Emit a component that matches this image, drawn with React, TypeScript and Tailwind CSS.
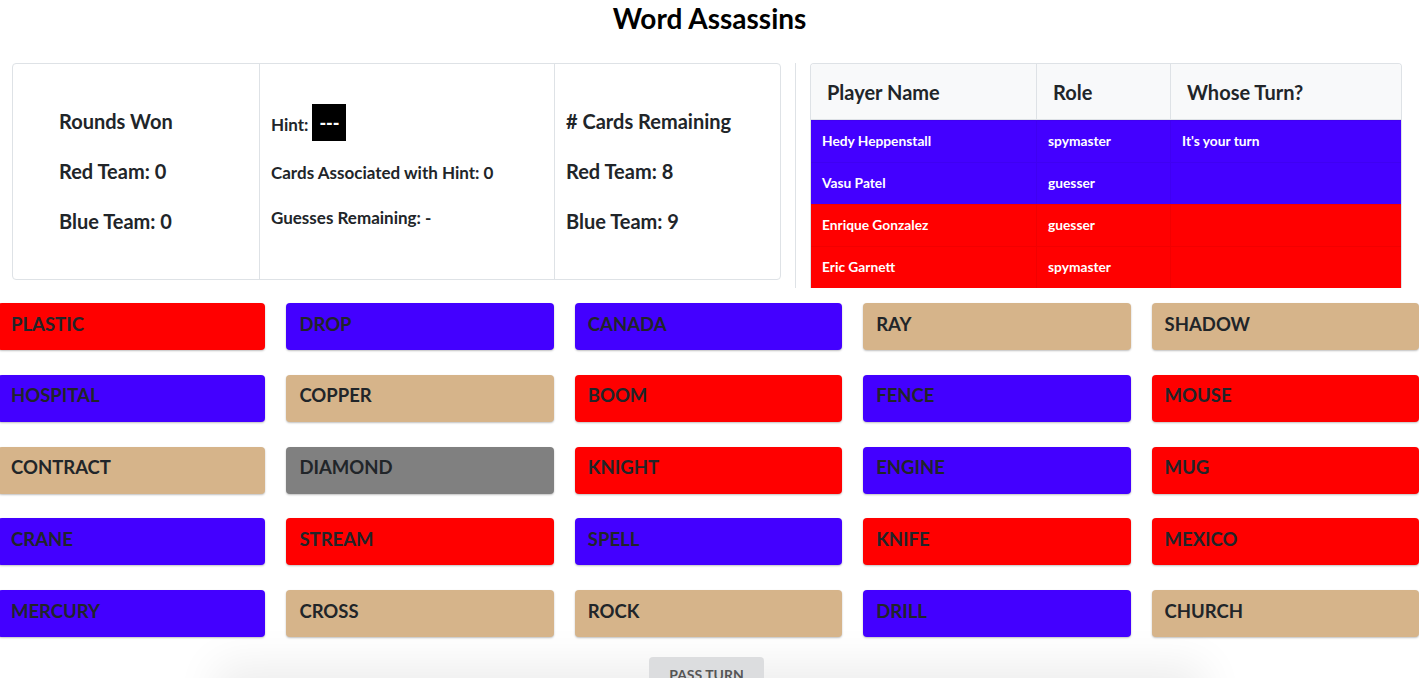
const cards: { word: string; color: string }[] = [
  { word: 'PLASTIC', color: 'bg-[#ff0000]' },
  { word: 'DROP', color: 'bg-[#4300ff]' },
  { word: 'CANADA', color: 'bg-[#4300ff]' },
  { word: 'RAY', color: 'bg-[#d6b48a]' },
  { word: 'SHADOW', color: 'bg-[#d6b48a]' },
  { word: 'HOSPITAL', color: 'bg-[#4300ff]' },
  { word: 'COPPER', color: 'bg-[#d6b48a]' },
  { word: 'BOOM', color: 'bg-[#ff0000]' },
  { word: 'FENCE', color: 'bg-[#4300ff]' },
  { word: 'MOUSE', color: 'bg-[#ff0000]' },
  { word: 'CONTRACT', color: 'bg-[#d6b48a]' },
  { word: 'DIAMOND', color: 'bg-[#808080]' },
  { word: 'KNIGHT', color: 'bg-[#ff0000]' },
  { word: 'ENGINE', color: 'bg-[#4300ff]' },
  { word: 'MUG', color: 'bg-[#ff0000]' },
  { word: 'CRANE', color: 'bg-[#4300ff]' },
  { word: 'STREAM', color: 'bg-[#ff0000]' },
  { word: 'SPELL', color: 'bg-[#4300ff]' },
  { word: 'KNIFE', color: 'bg-[#ff0000]' },
  { word: 'MEXICO', color: 'bg-[#ff0000]' },
  { word: 'MERCURY', color: 'bg-[#4300ff]' },
  { word: 'CROSS', color: 'bg-[#d6b48a]' },
  { word: 'ROCK', color: 'bg-[#d6b48a]' },
  { word: 'DRILL', color: 'bg-[#4300ff]' },
  { word: 'CHURCH', color: 'bg-[#d6b48a]' },
]

const players = [
  { name: 'Hedy Heppenstall', role: 'spymaster', turn: "It's your turn", color: 'bg-[#4300ff]' },
  { name: 'Vasu Patel', role: 'guesser', turn: '', color: 'bg-[#4300ff]' },
  { name: 'Enrique Gonzalez', role: 'guesser', turn: '', color: 'bg-[#ff0000]' },
  { name: 'Eric Garnett', role: 'spymaster', turn: '', color: 'bg-[#ff0000]' },
]

function ScoreBoard() {
  return (
    <div className="ml-[12px] flex h-[217px] w-[769px] rounded-[4px] border border-[#dee2e6] text-[#212529]">
      <div className="flex w-[247px] flex-col justify-center gap-[26px] border-r border-[#dee2e6] pb-[2px] pl-[46px] text-[20px] font-bold leading-[24px]">
        <div>Rounds Won</div>
        <div>Red Team: 0</div>
        <div>Blue Team: 0</div>
      </div>
      <div className="flex w-[295px] flex-col border-r border-[#dee2e6] pl-[11px] pt-[40px] text-[17px] font-bold leading-[24px]">
        <div className="flex h-[37px] items-center pt-[4px]">
          <span>Hint:</span>
          <span className="ml-[4px] mt-[-4px] flex h-[37px] w-[34px] items-center justify-center bg-black text-[18px] font-black text-white">
            ---
          </span>
        </div>
        <div className="mt-[20px]">Cards Associated with Hint: 0</div>
        <div className="mt-[21px]">Guesses Remaining: -</div>
      </div>
      <div className="flex flex-1 flex-col justify-center gap-[26px] pb-[2px] pl-[11px] text-[20px] font-bold leading-[24px]">
        <div># Cards Remaining</div>
        <div>Red Team: 8</div>
        <div>Blue Team: 9</div>
      </div>
    </div>
  )
}

function PlayerTable() {
  return (
    <div className="w-[592px] overflow-hidden rounded-t-[4px] border-x border-t border-[#dee2e6]">
      <div className="flex h-[56px] border-b border-[#dee2e6] bg-[#f8f9fa] text-[20px] font-bold text-[#212529]">
        <div className="flex w-[226px] items-center border-r border-[#dee2e6] pl-[16px]">Player Name</div>
        <div className="flex w-[134px] items-center border-r border-[#dee2e6] pl-[16px]">Role</div>
        <div className="flex flex-1 items-center pl-[16px]">Whose Turn?</div>
      </div>
      {players.map((p) => (
        <div
          key={p.name}
          className={`flex h-[42px] border-t border-black/5 text-[13.75px] font-bold text-white ${p.color}`}
        >
          <div className="flex w-[226px] items-center border-r border-black/5 pl-[11px]">{p.name}</div>
          <div className="flex w-[134px] items-center border-r border-black/5 pl-[11px]">{p.role}</div>
          <div className="flex flex-1 items-center pl-[11px]">{p.turn}</div>
        </div>
      ))}
    </div>
  )
}

export default function App() {
  return (
    <div className="h-screen overflow-hidden bg-white font-['Lato','Liberation_Sans',sans-serif]">
      <h1 className="h-[36px] text-center text-[28px] font-bold leading-[36px] text-black">Word Assassins</h1>

      <div className="mt-[27px] flex items-start">
        <ScoreBoard />
        <div className="ml-[14px] h-[225px] w-px bg-[#dee2e6]" />
        <div className="ml-[14px]">
          <PlayerTable />
        </div>
      </div>

      <div className="relative z-10 -ml-[2px] mt-[15px] grid w-[1421px] grid-cols-5 gap-x-[21px] gap-y-[24.75px]">
        {cards.map((c) => (
          <div
            key={c.word}
            className={`flex h-[47px] items-center rounded-[4px] pb-[4px] pl-[13px] text-[18.5px] font-bold text-[#212529] shadow-[0_1px_2px_rgba(0,0,0,0.25)] ${c.color}`}
          >
            {c.word}
          </div>
        ))}
      </div>

      <div className="mt-[20px] flex flex-col items-center">
        <button className="relative z-10 mr-[6px] h-[36px] w-[115px] rounded-[4px] bg-[#dcdddf] pb-[2px] text-[14px] font-bold text-[#555]">
          PASS TURN
        </button>
        <div className="-mt-[14px] h-[60px] w-[960px] bg-[#ededed] shadow-[0_0_44px_14px_#ededed]" />
      </div>
    </div>
  )
}
